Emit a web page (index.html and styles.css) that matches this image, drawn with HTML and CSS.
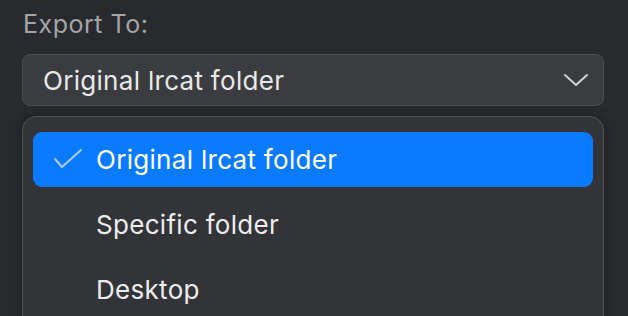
FILE: index.html
```html
<!DOCTYPE html>
<html>
<head>
<meta charset="utf-8">
<link rel="stylesheet" href="styles.css">
</head>
<body>
<div class="panel">
  <div class="label">Export To:</div>
  <div class="select">
    <span class="select-text">Original lrcat folder</span>
    <svg class="chevron" width="26" height="16" viewBox="0 0 26 16"><path d="M2 3 L13 13 L24 3" fill="none" stroke="#d0d0d2" stroke-width="2" stroke-linecap="round" stroke-linejoin="round"/></svg>
  </div>
  <div class="menu">
    <div class="item selected">
      <svg class="check" width="30" height="22" viewBox="0 0 30 22"><path d="M2 11 L9 19 L28 2" fill="none" stroke="#a9cdfb" stroke-width="2" stroke-linecap="round" stroke-linejoin="round"/></svg>
      <span>Original lrcat folder</span>
    </div>
    <div class="item"><span>Specific folder</span></div>
    <div class="item"><span>Desktop</span></div>
  </div>
</div>
</body>
</html>
```
FILE: styles.css
```css
html, body {
  margin: 0;
  padding: 0;
  background: #292a2d;
  width: 628px;
  height: 316px;
  overflow: hidden;
}
body {
  font-family: Inter, "Noto Sans", sans-serif;
  -webkit-font-smoothing: antialiased;
}
.panel {
  box-sizing: border-box;
  height: 316px;
  overflow: hidden;
  padding: 9px 24px 0 22px;
  display: flex;
  flex-direction: column;
}
.label {
  color: #a4a5a8;
  font-size: 25px;
  letter-spacing: 0.5px;
  line-height: 30px;
  padding-left: 1px;
  height: 30px;
  margin-bottom: 15px;
}
.select {
  flex: none;
  height: 50px;
  border: 1px solid #4a4c50;
  border-radius: 8px;
  background: #3a3c3f;
  display: flex;
  align-items: center;
  justify-content: space-between;
  padding: 0 14px 0 20px;
}
.select-text {
  color: #e8e8ea;
  font-size: 26px;
  letter-spacing: 0.3px;
}
.chevron {
  display: block;
}
.menu {
  flex: none;
  margin-top: 10px;
  height: 220px;
  border: 1px solid #505256;
  border-radius: 14px;
  background: #333437;
  padding: 15px 10px 0 10px;
  box-shadow: 0 0 12px rgba(0,0,0,0.35);
  display: flex;
  flex-direction: column;
  gap: 10px;
}
.item {
  flex: none;
  height: 55px;
  border-radius: 9px;
  display: flex;
  align-items: center;
  padding-left: 63px;
  color: #ececee;
  font-size: 26px;
  letter-spacing: 0.3px;
  position: relative;
}
.item.selected {
  background: #0a7aff;
  color: #ffffff;
}
.check {
  position: absolute;
  left: 20px;
  top: 16px;
}
```
